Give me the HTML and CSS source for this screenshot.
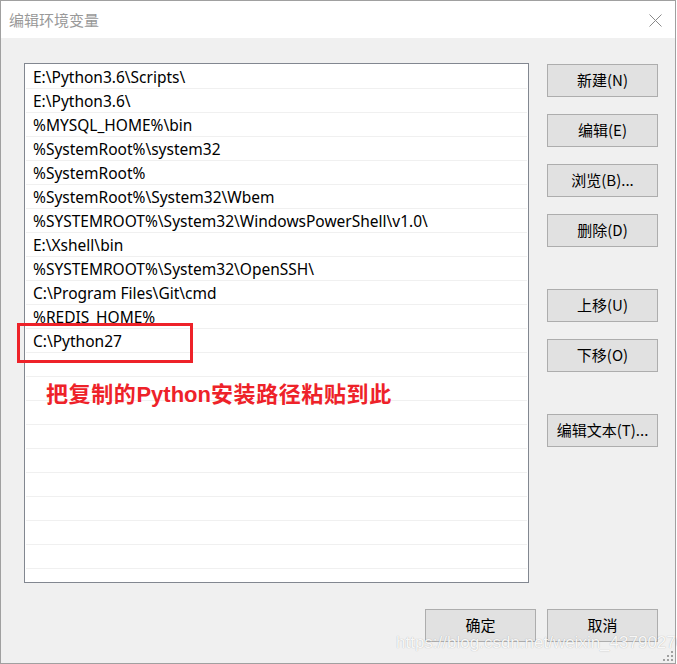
FILE: index.html
```html
<!DOCTYPE html>
<html lang="zh-CN">
<head>
<meta charset="utf-8">
<title>编辑环境变量</title>
<link rel="stylesheet" href="styles.css">
</head>
<body>
<div class="window">
  <div class="titlebar">
    <span class="title">编辑环境变量</span>
    <svg class="close" width="13" height="13" viewBox="0 0 13 13"><path d="M0.5 0.5 L12.5 12.5 M12.5 0.5 L0.5 12.5" stroke="#8a8a8a" stroke-width="1" fill="none"/></svg>
  </div>
  <div class="content">
    <div class="main">
      <div class="list">
        <div class="row">E:\Python3.6\Scripts\</div>
        <div class="row">E:\Python3.6\</div>
        <div class="row">%MYSQL_HOME%\bin</div>
        <div class="row">%SystemRoot%\system32</div>
        <div class="row">%SystemRoot%</div>
        <div class="row">%SystemRoot%\System32\Wbem</div>
        <div class="row">%SYSTEMROOT%\System32\WindowsPowerShell\v1.0\</div>
        <div class="row">E:\Xshell\bin</div>
        <div class="row">%SYSTEMROOT%\System32\OpenSSH\</div>
        <div class="row">C:\Program Files\Git\cmd</div>
        <div class="row">%REDIS_HOME%</div>
        <div class="row">C:\Python27</div>
        <div class="row"></div>
        <div class="row"></div>
        <div class="row"></div>
        <div class="row"></div>
        <div class="row"></div>
        <div class="row"></div>
        <div class="row"></div>
        <div class="row"></div>
        <div class="row"></div>
        <div class="row"></div>
      </div>
      <div class="side">
        <div class="group">
          <button class="btn">新建(N)</button>
          <button class="btn">编辑(E)</button>
          <button class="btn">浏览(B)...</button>
          <button class="btn">删除(D)</button>
        </div>
        <div class="group">
          <button class="btn">上移(U)</button>
          <button class="btn">下移(O)</button>
        </div>
        <div class="group">
          <button class="btn">编辑文本(T)...</button>
        </div>
      </div>
    </div>
    <div class="footer">
      <button class="btn">确定</button>
      <button class="btn">取消</button>
    </div>
  </div>
  <div class="highlight"></div>
  <div class="note">把复制的<span class="latin">Python</span>安装路径粘贴到此</div>
  <div class="watermark">https://blog.csdn.net/weixin_43790276</div>
  <svg class="grip" width="12" height="12" viewBox="0 0 12 12">
    <rect x="9" y="1" width="2" height="2" fill="#a0a0a0"/>
    <rect x="5" y="5" width="2" height="2" fill="#a0a0a0"/>
    <rect x="9" y="5" width="2" height="2" fill="#a0a0a0"/>
    <rect x="1" y="9" width="2" height="2" fill="#a0a0a0"/>
    <rect x="5" y="9" width="2" height="2" fill="#a0a0a0"/>
    <rect x="9" y="9" width="2" height="2" fill="#a0a0a0"/>
  </svg>
</div>
</body>
</html>
```
FILE: styles.css
```css
* { box-sizing: border-box; }
html, body { margin: 0; padding: 0; background: #ffffff; }
body { width: 677px; height: 664px; overflow: hidden; }

.window {
  position: relative;
  width: 676px;
  height: 664px;
  border: 1px solid #a0a0a0;
  display: flex;
  flex-direction: column;
  background: #f0f0f0;
}

.titlebar {
  height: 37px;
  flex: none;
  background: #ffffff;
  display: flex;
  align-items: center;
  justify-content: space-between;
  padding: 0 13px 0 8px;
}
.title {
  font-family: "Noto Sans CJK SC", sans-serif;
  font-size: 15px;
  line-height: 20px;
  color: #999999;
  padding-top: 1px;
}
.close { display: block; margin-top: 1px; }

.content {
  flex: 1;
  display: flex;
  flex-direction: column;
  padding: 25px 17px 21px 23px;
}

.main {
  display: flex;
  gap: 18px;
  height: 520px;
}

.list {
  width: 505px;
  height: 520px;
  border: 1px solid #828790;
  background: #ffffff;
  padding: 1px 1px 0 1px;
  overflow: hidden;
}
.row {
  height: 24px;
  border-bottom: 1px solid #f0f0f0;
  padding: 2px 0 0 7px;
  font-family: "Noto Sans", "Open Sans", sans-serif;
  font-size: 15.5px;
  line-height: 20px;
  color: #000000;
  white-space: nowrap;
}

.side {
  width: 111px;
  padding-top: 1px;
  display: flex;
  flex-direction: column;
  gap: 42px;
}
.group {
  display: flex;
  flex-direction: column;
  gap: 17px;
}

.btn {
  width: 111px;
  height: 33px;
  margin: 0;
  padding: 0 0 1px 0;
  background: #e1e1e1;
  border: 1px solid #adadad;
  border-radius: 0;
  font-family: "Noto Sans CJK SC", sans-serif;
  font-size: 15px;
  line-height: 20px;
  color: #000000;
}

.footer {
  margin-top: 26px;
  display: flex;
  justify-content: flex-end;
  gap: 11px;
}

.highlight {
  position: absolute;
  left: 16px;
  top: 322px;
  width: 176px;
  height: 40px;
  border: 3px solid #ee2229;
}

.note {
  position: absolute;
  left: 45px;
  top: 379px;
  font-family: "Noto Sans CJK SC", sans-serif;
  font-size: 22px;
  line-height: 24px;
  font-weight: 700;
  letter-spacing: 0.6px;
  color: #ee2229;
  white-space: nowrap;
}
.note .latin {
  font-family: "Liberation Sans", Arial, sans-serif;
  font-weight: 700;
  letter-spacing: 0;
}

.watermark {
  position: absolute;
  left: 395px;
  top: 632px;
  font-family: "Liberation Sans", Arial, sans-serif;
  font-size: 17px;
  line-height: 20px;
  color: rgba(255, 255, 255, 0.92);
  text-shadow: 0 0 1px rgba(0, 0, 0, 0.3);
  white-space: nowrap;
}

.grip {
  position: absolute;
  right: 1px;
  bottom: 1px;
  display: block;
}
```
